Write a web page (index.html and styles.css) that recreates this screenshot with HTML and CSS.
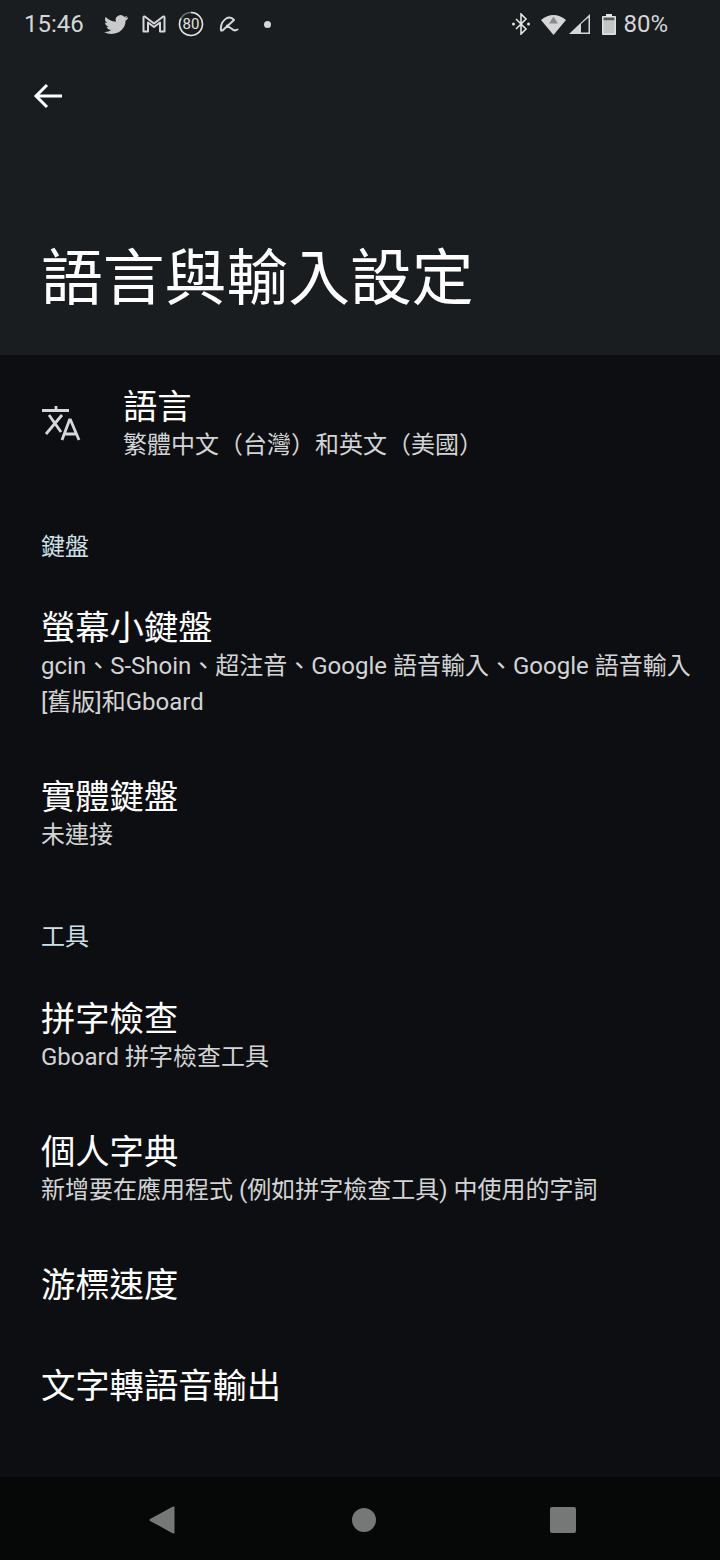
FILE: index.html
```html
<!DOCTYPE html>
<html lang="zh-Hant">
<head>
    <meta charset="UTF-8">
    <meta name="viewport" content="width=device-width, initial-scale=1.0">
    <title>語言與輸入設定</title>
    <link rel="stylesheet" href="styles.css">
</head>
<body>

    <div class="screen">
        <header class="header">
            <div class="statusbar">
                <span class="time">15:46</span>
                <svg class="ic ic-twitter" width="24" height="19" viewBox="0 2 24 21" preserveAspectRatio="none"><path d="M23.9 4.6c-.9.4-1.8.7-2.8.8 1-.6 1.8-1.6 2.2-2.7-1 .6-2 1-3.1 1.2A4.9 4.9 0 0 0 11.8 8.400c0 .4 0 .8.1 1.100C7.800 9.300 4.200 7.300 1.700 4.300c-.4.700-.7 1.600-.7 2.500 0 1.700.9 3.200 2.200 4.100-.8 0-1.600-.2-2.200-.6v.1c0 2.400 1.700 4.400 3.900 4.800-.4.100-.8.200-1.300.2-.3 0-.6 0-.9-.1.600 2 2.400 3.400 4.600 3.400a9.900 9.900 0 0 1-7.300 2A13.900 13.900 0 0 0 7.500 23c9 0 14-7.500 14-14v-.6c1-.7 1.800-1.600 2.400-2.600z" fill="#c9caca"/></svg>
                <svg class="ic ic-gmail" width="24" height="18" viewBox="0 0 24 18"><path d="M1.500 16.500V2.500Q1.500 1.300 2.800 1.500L12 8.500 21.200 1.500Q22.500 1.300 22.500 2.500V16.500H18V7.500L12 12 6 7.500V16.500Z" fill="none" stroke="#d5d6d7" stroke-width="2" stroke-linejoin="round"/></svg>
                <svg class="ic ic-data" width="26" height="26" viewBox="0 0 26 26"><circle cx="13" cy="13" r="11.500" fill="none" stroke="#6d6f71" stroke-width="1.500"/><path d="M13 1.500A11.500 11.500 0 1 1 3 7.300" fill="none" stroke="#e2e3e3" stroke-width="1.500"/><text x="13" y="18" text-anchor="middle" class="data-num">80</text></svg>
                <svg class="ic ic-umbrella" width="20" height="16" viewBox="0 0 20 16"><path d="M2 14.500Q1 6 8 2Q12 .5 15 4L3.500 14.500ZM8 9.500L13 13Q15.500 15.500 18.500 13.500" fill="none" stroke="#d5d6d7" stroke-width="2" stroke-linejoin="round" stroke-linecap="round"/></svg>
                <span class="dot"></span>
                <span class="spacer"></span>
                <svg class="ic ic-bt" width="20" height="22" viewBox="0 0 20 22"><path d="M5 6l10 10-5 5V1l5 5L5 16" fill="none" stroke="#e2e3e3" stroke-width="1.600"/><circle cx="2.500" cy="11" r="1.500" fill="#e2e3e3"/><circle cx="17.500" cy="11" r="1.500" fill="#e2e3e3"/></svg>
                <svg class="ic ic-wifi" width="25" height="21" viewBox="0 0 25 21"><path d="M12.500 21L0 6Q12.500-4 25 6Z" fill="#d5d6d7"/><path d="M8 9.500L12.500 2.500 17 9.500Z" fill="#8a8b8c"/></svg>
                <svg class="ic ic-signal" width="21" height="20" viewBox="0 0 21 20"><path d="M0 20L21 0V20Z" fill="#d5d6d7"/><path d="M12 10L19.500 3.500V18.500H12Z" fill="#1a1d20"/></svg>
                <svg class="ic ic-battery" width="14" height="21" viewBox="0 0 14 21"><path d="M4 0h6v2h3q1 0 1 1v17q0 1-1 1H1q-1 0-1-1V3q0-1 1-1h3z" fill="#e2e3e3"/><rect x="1.500" y="3.500" width="11" height="3" fill="#55575a"/><rect x="1.500" y="6.500" width="11" height="13" fill="#c4c5c6"/></svg>
                <span class="batt">80%</span>
            </div>
            <div class="toolbar">
                <svg width="30" height="26" viewBox="0 0 30 26"><path d="M29 13H3M14 2L3 13l11 11" fill="none" stroke="#fff" stroke-width="3"/></svg>
            </div>
            <h1>語言與輸入設定</h1>
        </header>

        <main class="list">
            <div class="item item-icon">
                <svg class="lang-icon" width="40" height="36" viewBox="0 0 40 36">
                    <path d="M1 4.500H28M15 0V4.500M21 9L5 28M8 9L20 26" fill="none" stroke="#d5d7d9" stroke-width="2.800"/>
                    <path d="M21 34L28.500 14H29.500L38 34M23.500 28H35.500" fill="none" stroke="#d5d7d9" stroke-width="2.800"/>
                </svg>
                <div>
                    <div class="item-title">語言</div>
                    <div class="item-sub">繁體中文（台灣）和英文（美國）</div>
                </div>
            </div>

            <div class="category cat-first">鍵盤</div>
            <div class="item">
                <div class="item-title">螢幕小鍵盤</div>
                <div class="item-sub">gcin、S-Shoin、超注音、Google 語音輸入、Google 語音輸入 [舊版]和Gboard</div>
            </div>
            <div class="item">
                <div class="item-title">實體鍵盤</div>
                <div class="item-sub">未連接</div>
            </div>

            <div class="category">工具</div>
            <div class="item">
                <div class="item-title">拼字檢查</div>
                <div class="item-sub">Gboard 拼字檢查工具</div>
            </div>
            <div class="item">
                <div class="item-title">個人字典</div>
                <div class="item-sub">新增要在應用程式 (例如拼字檢查工具) 中使用的字詞</div>
            </div>
            <div class="item item-single">
                <div class="item-title">游標速度</div>
            </div>
            <div class="item item-single">
                <div class="item-title">文字轉語音輸出</div>
            </div>
        </main>

        <nav class="navbar">
            <svg width="26" height="28" viewBox="0 0 26 28"><path d="M24.500 1.500V26.500L1.500 14Z" fill="#767777" stroke="#767777" stroke-width="2" stroke-linejoin="round"/></svg>
            <span class="nav-home"></span>
            <span class="nav-square"></span>
        </nav>
    </div>

</body>
</html>
```

FILE: styles.css
```css
body {
    font-family: Roboto, "Noto Sans CJK TC", sans-serif;
    background-color: #0d0e11;
    color: #fff;
    margin: 0;
    padding: 0;
}

.screen {
    width: 720px;
    height: 1560px;
    display: flex;
    flex-direction: column;
    overflow: hidden;
}

.header {
    background-color: #1a1d20;
    height: 355px;
    flex: none;
}

.statusbar {
    height: 48px;
    display: flex;
    align-items: center;
    padding: 0 52px 0 24px;
    color: #d5d6d7;
    font-size: 24px;
}

.ic {
    flex: none;
}

.time {
    width: 61px;
    margin-right: 19px;
}

.ic-gmail {
    margin-left: 14px;
}

.ic-data {
    margin-left: 12px;
}

.data-num {
    font-family: Roboto, sans-serif;
    font-size: 15px;
    fill: #e2e3e3;
}

.ic-umbrella {
    margin-left: 15px;
}

.dot {
    width: 7px;
    height: 7px;
    margin-left: 25px;
    border-radius: 50%;
    background-color: #d5d6d7;
}

.spacer {
    flex: 1;
}

.ic-wifi {
    margin-left: 10px;
}

.ic-signal {
    margin-left: 3px;
}

.ic-battery {
    margin-left: 12px;
}

.batt {
    margin-left: 7px;
}

.toolbar {
    height: 96px;
    display: flex;
    align-items: center;
    padding-left: 33px;
}

h1 {
    margin: 93px 0 0 41px;
    font-size: 61.8px;
    font-weight: 400;
    line-height: 84px;
}

.list {
    flex: 1;
}

.item {
    padding: 27px 20px 28px 41px;
}

.item-icon {
    display: flex;
    align-items: center;
    padding-top: 30px;
    padding-bottom: 0;
}

.lang-icon {
    margin-right: 42px;
    flex: none;
}

.item-single {
    padding-top: 27px;
    padding-bottom: 32px;
}

.item-title {
    font-size: 34.3px;
    line-height: 40px;
    padding-top: 2px;
}

.item-sub {
    font-size: 24px;
    line-height: 36px;
    color: #d3d4d5;
}

.category {
    margin-top: 37px;
    padding: 1px 0 15px 41px;
    font-size: 24px;
    line-height: 36px;
    color: #cfe0ea;
}

.cat-first {
    margin-top: 65px;
    padding-bottom: 14px;
}

.navbar {
    height: 83px;
    flex: none;
    box-sizing: border-box;
    padding: 3px 0 0 149px;
    background-color: #060808;
    display: flex;
    align-items: center;
}

.nav-home {
    width: 24px;
    height: 24px;
    margin-left: 177px;
    border-radius: 50%;
    background-color: #767777;
}

.nav-square {
    width: 26px;
    height: 26px;
    margin-left: 174px;
    border-radius: 2px;
    background-color: #767777;
}
```
